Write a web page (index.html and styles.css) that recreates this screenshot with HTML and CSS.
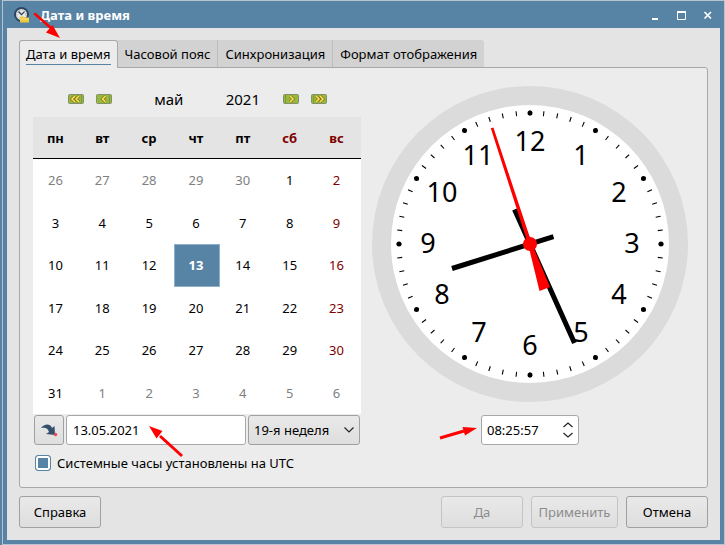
FILE: index.html
```html
<!DOCTYPE html>
<html lang="ru">
<head>
<meta charset="utf-8">
<title>Дата и время</title>
<link rel="stylesheet" href="styles.css">
</head>
<body>
<div class="window">
  <header class="titlebar">
    <svg class="app-icon" width="17" height="16" viewBox="0 0 17 16" aria-hidden="true">
      <circle cx="7.5" cy="7.5" r="6.500" fill="#e8e8e4" stroke="#2e4562" stroke-width="2"/>
      <circle cx="7.5" cy="7.5" r="4.500" fill="none" stroke="#8d98a4" stroke-width="1" stroke-dasharray="1 1.6"/>
      <path d="M4.5 4.5l3 3.2 3-3" fill="none" stroke="#26384e" stroke-width="1.2"/>
      <path d="M6 9.5h3.5l1 1H15v5H6z" fill="#ecc93e"/>
      <path d="M6 12h9" stroke="#f8e27a"/>
    </svg>
    <h1 class="title">Дата и время</h1>
    <div class="window-controls">
      <button class="window-button" aria-label="Свернуть"><svg width="13" height="13" viewBox="0 0 13 13"><path d="M3 10h6v2H3z" fill="#fff"/></svg></button>
      <button class="window-button" aria-label="Развернуть"><svg width="13" height="13" viewBox="0 0 13 13"><path d="M2.500 3.500h8v8h-8z" fill="none" stroke="#fff"/><path d="M2 3h9v2H2z" fill="#fff"/></svg></button>
      <button class="window-button" aria-label="Закрыть"><svg width="13" height="13" viewBox="0 0 13 13"><path d="M3.5 4l6.500 6.500M10 4l-6.500 6.500" fill="none" stroke="#fff" stroke-width="1.700"/></svg></button>
    </div>
  </header>

  <main class="content">
    <nav class="tabs" role="tablist">
      <button class="tab tab-active" role="tab" aria-selected="true"><span class="tab-label">Дата и время</span></button>
      <button class="tab" role="tab">Часовой пояс</button>
      <button class="tab" role="tab">Синхронизация</button>
      <button class="tab" role="tab">Формат отображения</button>
    </nav>

    <section class="panel">
      <div class="date-column">
        <div class="month-bar">
          <div class="steps">
            <button class="step" aria-label="Предыдущий год"><svg width="16" height="10" viewBox="0 0 16 10"><rect x=".5" y=".5" width="15" height="9" rx="1" fill="#96b83e" stroke="#84906a"/><path d="M13.500 1v8" stroke="#7e9a36"/><path d="M7 2L4 5l3 3M11 2L8 5l3 3" fill="none" stroke="#7c7428" stroke-width="3"/><path d="M7 2L4 5l3 3M11 2L8 5l3 3" fill="none" stroke="#ffe04a" stroke-width="1.600"/></svg></button>
            <button class="step" aria-label="Предыдущий месяц"><svg width="16" height="10" viewBox="0 0 16 10"><rect x=".5" y=".5" width="15" height="9" rx="1" fill="#96b83e" stroke="#84906a"/><path d="M13.500 1v8" stroke="#7e9a36"/><path d="M9.500 2l-3 3 3 3" fill="none" stroke="#7c7428" stroke-width="3"/><path d="M9.500 2l-3 3 3 3" fill="none" stroke="#ffe04a" stroke-width="1.600"/></svg></button>
          </div>
          <span class="month">май</span>
          <span class="year">2021</span>
          <div class="steps">
            <button class="step" aria-label="Следующий месяц"><svg width="16" height="10" viewBox="0 0 16 10"><rect x=".5" y=".5" width="15" height="9" rx="1" fill="#96b83e" stroke="#84906a"/><path d="M2.500 1v8" stroke="#7e9a36"/><path d="M7 2l3 3-3 3" fill="none" stroke="#7c7428" stroke-width="3"/><path d="M7 2l3 3-3 3" fill="none" stroke="#ffe04a" stroke-width="1.600"/></svg></button>
            <button class="step" aria-label="Следующий год"><svg width="16" height="10" viewBox="0 0 16 10"><rect x=".5" y=".5" width="15" height="9" rx="1" fill="#96b83e" stroke="#84906a"/><path d="M2.500 1v8" stroke="#7e9a36"/><path d="M5 2l3 3-3 3M9 2l3 3-3 3" fill="none" stroke="#7c7428" stroke-width="3"/><path d="M5 2l3 3-3 3M9 2l3 3-3 3" fill="none" stroke="#ffe04a" stroke-width="1.600"/></svg></button>
          </div>
        </div>

        <table class="calendar">
          <thead>
            <tr><th>пн</th><th>вт</th><th>ср</th><th>чт</th><th>пт</th><th class="weekend">сб</th><th class="weekend">вс</th></tr>
          </thead>
          <tbody>
            <tr><td class="other">26</td><td class="other">27</td><td class="other">28</td><td class="other">29</td><td class="other">30</td><td>1</td><td class="weekend">2</td></tr>
            <tr><td>3</td><td>4</td><td>5</td><td>6</td><td>7</td><td>8</td><td class="weekend">9</td></tr>
            <tr><td>10</td><td>11</td><td>12</td><td class="selected">13</td><td>14</td><td>15</td><td class="weekend">16</td></tr>
            <tr><td>17</td><td>18</td><td>19</td><td>20</td><td>21</td><td>22</td><td class="weekend">23</td></tr>
            <tr><td>24</td><td>25</td><td>26</td><td>27</td><td>28</td><td>29</td><td class="weekend">30</td></tr>
            <tr><td>31</td><td class="other">1</td><td class="other">2</td><td class="other">3</td><td class="other">4</td><td class="other">5</td><td class="other">6</td></tr>
          </tbody>
        </table>

        <div class="date-row">
          <button class="button today" aria-label="Сегодня"><svg width="18" height="14" viewBox="0 0 18 14"><path d="M1 5C4 1 10 0 12 5l2.500-2 .5 9-9-1 3-2C8 5 5 4 1 5z" fill="#34506e"/><circle cx="15.500" cy="11.500" r="1.700" fill="#e8475a"/></svg></button>
          <input class="field date-input" type="text" value="13.05.2021" aria-label="Дата">
          <select class="button week" aria-label="Неделя"><option>19-я неделя</option></select>
        </div>
      </div>

      <div class="time-column">
        <svg class="clock" viewBox="-158 -158 316 316" role="img" aria-label="08:25:57">
          <circle r="158" fill="#dbdbdb"/>
          <circle r="139" fill="#fff"/>
          <circle class="ticks" r="131" pathLength="60"/>
          <circle class="dots" r="131" pathLength="12"/>
          <g class="numerals">
            <text x="0" y="-93">12</text>
            <text x="51" y="-79">1</text>
            <text x="89" y="-42">2</text>
            <text x="102" y="9">3</text>
            <text x="89" y="60">4</text>
            <text x="51" y="98">5</text>
            <text x="0" y="111">6</text>
            <text x="-51" y="98">7</text>
            <text x="-88" y="60">8</text>
            <text x="-102" y="9">9</text>
            <text x="-88" y="-42">10</text>
            <text x="-52" y="-79">11</text>
          </g>
          <path class="hand" d="M-78 24.500L23.500-7.300M-15.500-34.500L44.500 99"/>
          <path fill="#f00" d="M-39.200-115.800l2.600-.8L1.700-1 20 43 9.500 47-1.700 1z"/>
          <circle r="7" fill="#f00"/>
        </svg>
        <div class="field time-field">
          <input class="time-input" type="text" value="08:25:57" aria-label="Время">
          <div class="spinner">
            <button class="spin" aria-label="Больше"><svg width="10" height="6" viewBox="0 0 10 6"><path d="M.5 5L5 1l4.500 4" fill="none" stroke="#222" stroke-width="1.200"/></svg></button>
            <button class="spin" aria-label="Меньше"><svg width="10" height="6" viewBox="0 0 10 6"><path d="M.5 1L5 5l4.500-4" fill="none" stroke="#222" stroke-width="1.200"/></svg></button>
          </div>
        </div>
      </div>

      <div class="utc-row">
        <input class="check" type="checkbox" id="utc" checked>
        <label for="utc">Системные часы установлены на UTC</label>
      </div>
    </section>

    <footer class="actions">
      <button class="button help">Справка</button>
      <button class="button" disabled>Да</button>
      <button class="button apply" disabled>Применить</button>
      <button class="button">Отмена</button>
    </footer>
  </main>
</div>

<svg class="pointer pointer-tab" width="30" height="28" viewBox="0 0 30 28" aria-hidden="true"><path d="M2 2l16 14" stroke="#f00" stroke-width="2.500" stroke-linecap="round"/><path d="M27 26l-14-5.500 6.500-7.500z" fill="#f00"/></svg>
<svg class="pointer pointer-date" width="36" height="34" viewBox="0 0 36 34" aria-hidden="true"><path d="M34 31L12 11" stroke="#f00" stroke-width="3"/><path d="M1 1l13.500 5-6 7.500z" fill="#f00"/></svg>
<svg class="pointer pointer-time" width="40" height="14" viewBox="0 0 40 14" aria-hidden="true"><path d="M1 12l24-7" stroke="#f00" stroke-width="3"/><path d="M38 2L26 9.500 23.500 1z" fill="#f00"/></svg>
</body>
</html>
```
FILE: styles.css
```css
* {
  box-sizing: border-box;
}

body {
  margin: 0;
  background: #5783a5;
  color: #000;
  font: 13px/18px "Noto Sans", sans-serif;
}

button,
input,
select {
  margin: 0;
  padding: 0;
  color: inherit;
  font: inherit;
}

.window {
  display: flex;
  flex-direction: column;
  min-height: 100vh;
  margin-left: 2px;
  padding: 0 4px 4px;
  border: 1px solid #b9c3d0;
  background: #5783a5;
}

/* Title bar */
.titlebar {
  display: flex;
  align-items: center;
  height: 27px;
  padding: 0 6px 0 7px;
}

.title {
  margin: 0 auto 0 9px;
  color: #fff;
  font-size: 13px;
  font-weight: bold;
}

.window-controls {
  display: flex;
  gap: 13px;
}

.window-button,
.step,
.spin {
  display: block;
  border: 0;
  background: none;
  line-height: 0;
}

/* Tabs */
.content {
  display: flex;
  flex: 1;
  flex-direction: column;
  padding: 12px;
  background: #e4e4e4;
}

.tabs {
  display: flex;
}

.tab {
  height: 27px;
  padding: 0 7px;
  border: 0;
  border-right: 1px solid #bcbcbc;
  background: #d2d2d2;
}

.tab:last-child {
  border-right: 0;
  border-radius: 0 3px 0 0;
}

.tab-active {
  z-index: 1;
  height: 28px;
  margin-bottom: -1px;
  padding: 0 6px;
  border: 1px solid #a8a8a8;
  border-bottom: 0;
  border-radius: 3px 3px 0 0;
  background: #ececec;
}

.tab-label {
  display: block;
  border-bottom: 1px solid #5783a5;
  line-height: 20px;
}

/* Page */
.panel {
  display: grid;
  flex: 1;
  grid-template-columns: 328px 1fr;
  align-content: start;
  gap: 9px 11px;
  padding: 18px 19px 14px 13px;
  border: 1px solid #a8a8a8;
  border-radius: 0 3px 3px 3px;
  background: #ececec;
}

.month-bar {
  display: flex;
  align-items: center;
  height: 26px;
  margin-bottom: 5px;
  padding: 0 34px 0 35px;
  font-size: 15px;
}

.steps {
  display: flex;
  gap: 12px;
}

.month {
  margin: 0 auto;
}

.year {
  margin-right: 23px;
}

.calendar {
  width: 100%;
  height: 297px;
  table-layout: fixed;
  border-spacing: 0;
  background: #fff;
  text-align: center;
}

.calendar th {
  height: 42px;
  padding: 0 2px 0 0;
  border-bottom: 1px solid #000;
  background: #e4e4e4;
  font-weight: bold;
}

.calendar td {
  padding: 0 2px 0 0;
}

.calendar .weekend {
  color: #800000;
}

.calendar .other {
  color: #808080;
}

.calendar .selected {
  background: #5783a5;
  box-shadow: inset 0 0 0 1px #8fb0ca;
  color: #fff;
  font-weight: bold;
}

.date-row {
  display: flex;
  gap: 2px;
  margin: 1px 1px 0;
}

.button {
  min-width: 82px;
  height: 32px;
  border: 1px solid #a0a0a0;
  border-radius: 3px;
  background: linear-gradient(#e9e9e9, #dedede);
}

.button:disabled {
  border-color: #c4c4c4;
  color: #8c8c8c;
}

.field {
  height: 30px;
  border: 1px solid #a8a8a8;
  border-radius: 3px;
  background: #fff;
}

.today {
  display: grid;
  place-items: center;
  min-width: 0;
  width: 30px;
  height: 30px;
}

.date-input {
  flex: 1;
  min-width: 0;
  padding: 0 6px;
}

.week {
  width: 112px;
  height: 30px;
  padding: 0 5px;
  appearance: none;
  background: url("data:image/svg+xml,%3Csvg xmlns='http://www.w3.org/2000/svg' width='10' height='6'%3E%3Cpath d='M.5.5L5 5 9.500.5' fill='none' stroke='%23222' stroke-width='1.200'/%3E%3C/svg%3E") no-repeat right 5px center, linear-gradient(#e9e9e9, #dedede);
}

/* Clock */
.time-column {
  display: flex;
  flex-direction: column;
  align-items: center;
  justify-content: space-between;
}

.clock {
  width: 100%;
  max-width: 316px;
}

.ticks,
.dots {
  fill: none;
  stroke: #000;
  stroke-width: 5;
}

.ticks {
  stroke-dasharray: 0.08 0.92;
  stroke-dashoffset: 0.04;
}

.dots {
  stroke-dasharray: 0 1;
  stroke-linecap: round;
}

.numerals {
  font-size: 27px;
  text-anchor: middle;
}

.hand {
  fill: none;
  stroke: #000;
  stroke-width: 5;
}

.time-field {
  display: flex;
  align-items: center;
  width: 98px;
  padding: 0 5px;
}

.time-input {
  flex: 1;
  min-width: 0;
  border: 0;
  background: none;
  outline: 0;
}

.spinner {
  display: grid;
  gap: 4px;
}

.utc-row {
  display: flex;
  grid-column: 1 / -1;
  align-items: center;
  gap: 6px;
  padding-left: 2px;
}

.check {
  width: 16px;
  height: 16px;
  border: 1px solid #5783a5;
  border-radius: 3px;
  appearance: none;
  background: #5783a5;
  box-shadow: inset 0 0 0 2px #fff;
}

/* Dialog buttons */
.actions {
  display: flex;
  gap: 8px;
  margin-top: 8px;
}

.help {
  margin-right: auto;
}

.apply {
  min-width: 87px;
}

/* Red arrows over the dialog */
.pointer {
  position: absolute;
  z-index: 2;
}

.pointer-tab {
  top: 12px;
  left: 33px;
}

.pointer-date {
  top: 425px;
  left: 148px;
}

.pointer-time {
  top: 426px;
  left: 439px;
}
```
